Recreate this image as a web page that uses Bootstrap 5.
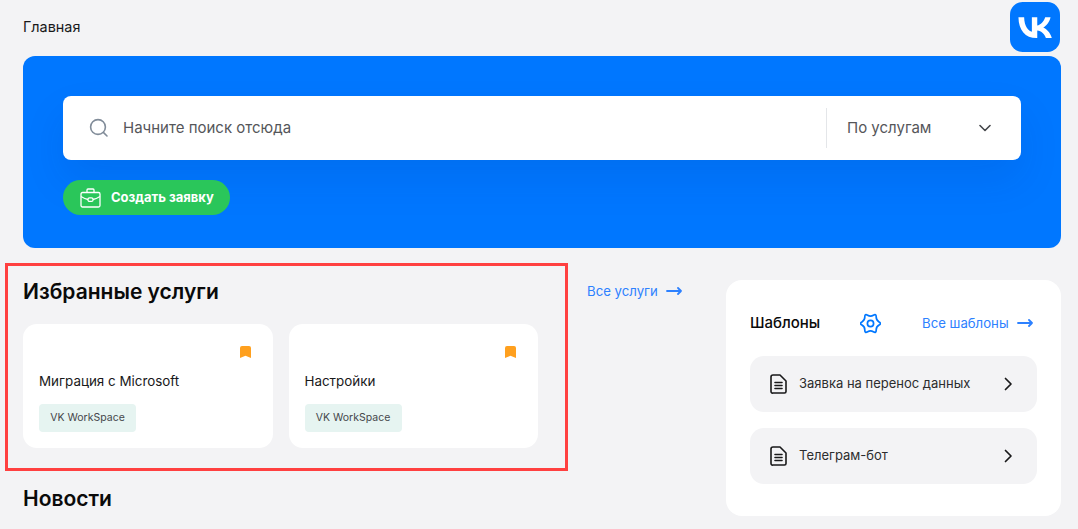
<!DOCTYPE html>
<html lang="ru">
<head>
    <meta charset="UTF-8">
    <meta name="viewport" content="width=device-width, initial-scale=1.0">
    <title>Главная</title>
    <link rel="stylesheet" href="https://cdn.jsdelivr.net/npm/bootstrap@5.3.0/dist/css/bootstrap.min.css">
    <style>
        body {
            background-color: #f3f3f5;
            font-family: Inter, "Noto Sans", sans-serif;
            color: #19191a;
            overflow: hidden;
        }

        a { text-decoration: none; }

        .page-wrap {
            height: 529px;
            padding: 2px 17px 0 23px;
        }

        .top-line { height: 54px; }
        .crumb { font-size: 14.4px; line-height: 20px; margin-top: 15px; }
        .vk-logo { width: 50px; height: 50px; margin-right: 1px; }

        .hero {
            height: 192px;
            padding: 40px;
            background: #0077ff;
            border-radius: 12px;
        }

        .search-bar {
            height: 64px;
            background: #fff;
            border-radius: 8px;
            box-shadow: 0 20px 40px rgba(0, 40, 120, .1);
        }

        .search-main { padding-left: 26px; gap: 14px; font-size: 15px; color: #55565a; }
        .search-scope {
            width: 195px;
            height: 40px;
            padding: 0 30px 0 20px;
            border-left: 1px solid #e4e6e9;
            font-size: 15px;
            color: #55565a;
        }

        .create-btn {
            width: 167px;
            height: 35px;
            margin-top: 20px;
            padding: 0 0 0 17px;
            gap: 10px;
            background: #2ac65a;
            border-radius: 18px;
            color: #fff;
            font-size: 13px;
            font-weight: 700;
        }

        .lower-row { margin-top: 15px; }

        .fav-frame {
            width: 563px;
            height: 208px;
            margin-left: -18px;
            padding: 11px 27px 0 15px;
            border: 3px solid #ff4040;
            flex-shrink: 0;
        }

        .block-title { font-size: 21px; font-weight: 600; line-height: 30px; margin: 0; color: #0a0a0a; }

        .fav-list { margin-top: 17px; gap: 16px; }
        .fav-card {
            width: 250px;
            height: 124px;
            padding: 22px 22px 0 16px;
            background: #fff;
            border-radius: 14px;
        }

        .fav-name { font-size: 13.4px; line-height: 20px; margin-top: 13px; }
        .fav-tag {
            width: 97px;
            height: 28px;
            margin-top: 13px;
            background: #e6f4f1;
            border-radius: 4px;
            font-size: 10.5px;
            color: #45474b;
        }

        .news-title { margin-top: 13px; }

        .more-link { color: #2d81ff; font-size: 13.2px; gap: 8px; line-height: 20px; }
        .services-link { margin: 18px 0 0 19px; width: 139px; flex-shrink: 0; height: 20px; }

        .templates {
            width: 335px;
            height: 236px;
            margin-top: 17px;
            padding: 28px 24px 0 24px;
            background: #fff;
            border-radius: 16px;
        }

        .templates-head { height: 30px; }
        .templates-title { font-size: 15px; font-weight: 500; width: 110px; color: #0a0a0a; }
        .gear-icon { margin-right: 41px; }

        .tpl-item {
            height: 56px;
            margin-top: 16px;
            padding: 0 24px 0 20px;
            gap: 12px;
            background: #f3f3f5;
            border-radius: 14px;
            font-size: 13px;
            color: #2c2d2e;
        }
        .tpl-first { margin-top: 18px; }
        .tpl-item span { flex: 1; }
    </style>
</head>
<body>
    <div class="page-wrap">
        <!-- Top line -->
        <div class="top-line d-flex justify-content-between align-items-start">
            <div class="crumb">Главная</div>
            <svg class="vk-logo" viewBox="0 0 24 24" aria-label="VK">
                <rect width="24" height="24" rx="6" fill="#0077ff"/>
                <path fill="#fff" d="M6.79 7.3H4.05c.13 6.24 3.25 9.99 8.72 9.99h.31v-3.57c2.01.2 3.53 1.67 4.14 3.57h2.84c-.78-2.84-2.83-4.41-4.11-5.01 1.28-.74 3.08-2.54 3.51-4.98h-2.58c-.56 1.98-2.22 3.78-3.8 3.95V7.3H10.5v6.92c-1.6-.4-3.62-2.34-3.71-6.92Z"/>
            </svg>
        </div>

        <!-- Search -->
        <div class="hero">
            <div class="search-bar d-flex align-items-center">
                <div class="search-main d-flex align-items-center flex-grow-1">
                    <svg width="20" height="20" viewBox="0 0 20 20" fill="none" stroke="#818c99" stroke-width="1.6" stroke-linecap="round">
                        <circle cx="9" cy="9" r="7.4"/>
                        <path d="M14.6 14.6l3.4 3.4"/>
                    </svg>
                    <span>Начните поиск отсюда</span>
                </div>
                <div class="search-scope d-flex align-items-center justify-content-between">
                    <span>По услугам</span>
                    <svg width="12" height="8" viewBox="0 0 12 8" fill="none" stroke="#45474b" stroke-width="1.6" stroke-linecap="round" stroke-linejoin="round">
                        <path d="M1 1.500L6 6.500l5-5"/>
                    </svg>
                </div>
            </div>
            <a href="#" class="create-btn d-flex align-items-center">
                <svg width="21" height="20" viewBox="0 0 21 20" fill="none" stroke="#fff" stroke-width="1.3" stroke-linejoin="round">
                    <rect x="1" y="4.5" width="19" height="14.5" rx="1.5"/>
                    <path d="M7 4.5V2a1 1 0 0 1 1-1h5a1 1 0 0 1 1 1v2.5"/>
                    <path d="M1 8.5c3 1.8 5 2.6 7 3M20 8.5c-3 1.8-5 2.6-7 3"/>
                    <rect x="8" y="9.800" width="5" height="3.600" rx="1.500"/>
                </svg>
                <span>Создать заявку</span>
            </a>
        </div>

        <div class="lower-row d-flex align-items-start">
            <div>
                <!-- Favourites -->
                <section class="fav-frame">
                    <h2 class="block-title">Избранные услуги</h2>
                    <div class="fav-list d-flex">
                        <div class="fav-card">
                            <div class="d-flex justify-content-end">
                                <svg width="11" height="12" viewBox="0 0 11 12"><path fill="#ffa01e" d="M2 0h7a2 2 0 0 1 2 2V12L5.500 9.800 0 12V2a2 2 0 0 1 2-2Z"/></svg>
                            </div>
                            <div class="fav-name">Миграция с Microsoft</div>
                            <div class="fav-tag d-flex align-items-center justify-content-center">VK WorkSpace</div>
                        </div>
                        <div class="fav-card">
                            <div class="d-flex justify-content-end">
                                <svg width="11" height="12" viewBox="0 0 11 12"><path fill="#ffa01e" d="M2 0h7a2 2 0 0 1 2 2V12L5.500 9.800 0 12V2a2 2 0 0 1 2-2Z"/></svg>
                            </div>
                            <div class="fav-name">Настройки</div>
                            <div class="fav-tag d-flex align-items-center justify-content-center">VK WorkSpace</div>
                        </div>
                    </div>
                </section>
                <h2 class="block-title news-title">Новости</h2>
            </div>

            <a href="#" class="more-link services-link d-flex align-items-center">
                <span>Все услуги</span>
                <svg width="16" height="10" viewBox="0 0 16 10" fill="none" stroke="#2d81ff" stroke-width="1.8" stroke-linecap="round" stroke-linejoin="round"><path d="M1 5h14M12 2l3 3-3 3"/></svg>
            </a>

            <!-- Templates -->
            <aside class="templates">
                <div class="templates-head d-flex align-items-center">
                    <div class="templates-title">Шаблоны</div>
                    <svg class="gear-icon" width="21" height="21" viewBox="0 0 21 21" fill="none" stroke="#0077ff" stroke-width="1.7" stroke-linejoin="round">
                        <path d="M19.06 8.9Q22 10.5 19.06 12.1Q16.13 13.75 16.19 17.1Q16.25 20.46 13.37 18.73Q10.5 17 7.63 18.73Q4.75 20.46 4.81 17.1Q4.87 13.75 1.94 12.1Q-1 10.5 1.94 8.9Q4.87 7.25 4.81 3.9Q4.75 .54 7.63 2.27Q10.5 4 13.37 2.27Q16.25 .54 16.19 3.9Q16.13 7.25 19.06 8.9Z"/>
                        <circle cx="10.5" cy="10.5" r="3.1"/>
                    </svg>
                    <a href="#" class="more-link d-flex align-items-center">
                        <span>Все шаблоны</span>
                        <svg width="16" height="10" viewBox="0 0 16 10" fill="none" stroke="#2d81ff" stroke-width="1.8" stroke-linecap="round" stroke-linejoin="round"><path d="M1 5h14M12 2l3 3-3 3"/></svg>
                    </a>
                </div>
                <div class="tpl-item tpl-first d-flex align-items-center">
                    <svg width="17" height="20" viewBox="0 0 17 20" fill="none" stroke="#19191a" stroke-width="1.6" stroke-linejoin="round" stroke-linecap="round">
                        <path d="M3 1h7l6 6v10.500a1.500 1.500 0 0 1-1.500 1.500h-11.500A1.500 1.500 0 0 1 1 17.500v-14.500A2 2 0 0 1 3 1Z"/>
                        <path d="M5 8.500h7M5 11.500h7M5 14.500h7"/>
                    </svg>
                    <span>Заявка на перенос данных</span>
                    <svg width="9" height="14" viewBox="0 0 9 14" fill="none" stroke="#19191a" stroke-width="1.7" stroke-linecap="round" stroke-linejoin="round"><path d="M1.500 1.500L7 7l-5.500 5.500"/></svg>
                </div>
                <div class="tpl-item d-flex align-items-center">
                    <svg width="17" height="20" viewBox="0 0 17 20" fill="none" stroke="#19191a" stroke-width="1.6" stroke-linejoin="round" stroke-linecap="round">
                        <path d="M3 1h7l6 6v10.500a1.500 1.500 0 0 1-1.500 1.500h-11.500A1.500 1.500 0 0 1 1 17.500v-14.500A2 2 0 0 1 3 1Z"/>
                        <path d="M5 8.500h7M5 11.500h7M5 14.500h7"/>
                    </svg>
                    <span>Телеграм-бот</span>
                    <svg width="9" height="14" viewBox="0 0 9 14" fill="none" stroke="#19191a" stroke-width="1.7" stroke-linecap="round" stroke-linejoin="round"><path d="M1.500 1.500L7 7l-5.500 5.500"/></svg>
                </div>
            </aside>
        </div>
    </div>

    <script src="https://cdn.jsdelivr.net/npm/bootstrap@5.3.0/dist/js/bootstrap.bundle.min.js"></script>
</body>
</html>
